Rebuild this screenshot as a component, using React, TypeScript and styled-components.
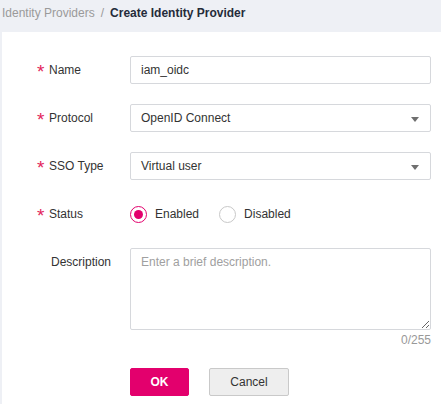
import React from "react";
import styled, { createGlobalStyle } from "styled-components";

const Global = createGlobalStyle`
  html, body { margin: 0; padding: 0; background: #eef0f5; }
  body { font-family: "Liberation Sans", Arial, sans-serif; font-size: 12px; color: #333; }
  * { box-sizing: border-box; }
`;

const Page = styled.div`
  padding-left: 2px;
  min-height: 404px;
  display: flex;
  flex-direction: column;
`;

const Breadcrumb = styled.div`
  height: 32px;
  display: flex;
  align-items: center;
  gap: 6px;
  padding-bottom: 6px;
  font-size: 12px;
  white-space: nowrap;
`;

const Crumb = styled.span<{ $current?: boolean }>`
  color: ${(p) => (p.$current ? "#252b3a" : "#9a9a9a")};
  font-weight: ${(p) => (p.$current ? "bold" : "normal")};
`;

const Sep = styled.span`
  color: #9a9a9a;
`;

const Panel = styled.div`
  flex: 1;
  background: #fff;
  padding: 24px 0 0 36px;
`;

const Form = styled.div`
  width: 393px;
  display: flex;
  flex-direction: column;
  gap: 20px;
`;

const Row = styled.div<{ $top?: boolean }>`
  display: grid;
  grid-template-columns: 92px 1fr;
  align-items: ${(p) => (p.$top ? "start" : "center")};
  min-height: 28px;
`;

const Label = styled.div<{ $required?: boolean }>`
  height: 28px;
  line-height: 28px;
  white-space: nowrap;
  padding-left: ${(p) => (p.$required ? "0" : "13px")};
  color: #333;
`;

const Star = styled.span`
  display: inline-block;
  color: #e2245c;
  font-size: 19px;
  line-height: 1;
  width: 12px;
  margin-left: -1px;
  vertical-align: -4px;
`;

const Input = styled.div`
  height: 28px;
  border: 1px solid #d6d8dc;
  border-radius: 2px;
  padding: 0 10px;
  display: flex;
  align-items: center;
  color: #333;
  position: relative;
`;

const Arrow = styled.span`
  position: absolute;
  right: 11px;
  top: 12px;
  width: 0;
  height: 0;
  border-left: 4.5px solid transparent;
  border-right: 4.5px solid transparent;
  border-top: 5px solid #6f6f6f;
`;

const Radios = styled.div`
  display: flex;
  align-items: center;
  gap: 20px;
  height: 28px;
`;

const RadioItem = styled.label`
  display: flex;
  align-items: center;
  gap: 8px;
  color: #333;
`;

const RadioCircle = styled.span<{ $checked?: boolean }>`
  width: 17px;
  height: 17px;
  border-radius: 50%;
  border: 1px solid ${(p) => (p.$checked ? "#e3006d" : "#c8c8c8")};
  display: flex;
  align-items: center;
  justify-content: center;
  &::after {
    content: "";
    width: 9px;
    height: 9px;
    border-radius: 50%;
    background: ${(p) => (p.$checked ? "#e3006d" : "transparent")};
  }
`;

const Field = styled.div`
  display: flex;
  flex-direction: column;
`;

const TextArea = styled.textarea`
  height: 82px;
  width: 100%;
  border: 1px solid #d6d8dc;
  border-radius: 2px;
  padding: 4px 10px;
  font-family: "Liberation Sans", Arial, sans-serif;
  font-size: 12px;
  line-height: 18px;
  color: #333;
  outline: none;
  display: block;
  &::placeholder { color: #a0a0a0; }
`;

const Counter = styled.div`
  text-align: right;
  color: #999;
  line-height: 20px;
  height: 20px;
`;

const Buttons = styled.div`
  display: flex;
  gap: 20px;
  padding-left: 92px;
  margin-top: -2px;
`;

const Button = styled.button<{ $primary?: boolean }>`
  height: 28px;
  width: ${(p) => (p.$primary ? "59px" : "80px")};
  border-radius: 2px;
  border: 1px solid ${(p) => (p.$primary ? "#e3006d" : "#c9c9c9")};
  background: ${(p) => (p.$primary ? "#e3006d" : "#eeeeee")};
  color: ${(p) => (p.$primary ? "#fff" : "#333")};
  font-weight: ${(p) => (p.$primary ? "bold" : "normal")};
  font-family: "Liberation Sans", Arial, sans-serif;
  font-size: 12px;
  padding: 0;
`;

export default function App() {
  return (
    <Page>
      <Global />
      <Breadcrumb>
        <Crumb>Identity Providers</Crumb>
        <Sep>/</Sep>
        <Crumb $current>Create Identity Provider</Crumb>
      </Breadcrumb>
      <Panel>
        <Form>
          <Row>
            <Label $required><Star>*</Star>Name</Label>
            <Input>iam_oidc</Input>
          </Row>
          <Row>
            <Label $required><Star>*</Star>Protocol</Label>
            <Input>OpenID Connect<Arrow /></Input>
          </Row>
          <Row>
            <Label $required><Star>*</Star>SSO Type</Label>
            <Input>Virtual user<Arrow /></Input>
          </Row>
          <Row>
            <Label $required><Star>*</Star>Status</Label>
            <Radios>
              <RadioItem><RadioCircle $checked />Enabled</RadioItem>
              <RadioItem><RadioCircle />Disabled</RadioItem>
            </Radios>
          </Row>
          <Row $top>
            <Label>Description</Label>
            <Field>
              <TextArea placeholder="Enter a brief description." readOnly />
              <Counter>0/255</Counter>
            </Field>
          </Row>
          <Buttons>
            <Button $primary>OK</Button>
            <Button>Cancel</Button>
          </Buttons>
        </Form>
      </Panel>
    </Page>
  );
}
